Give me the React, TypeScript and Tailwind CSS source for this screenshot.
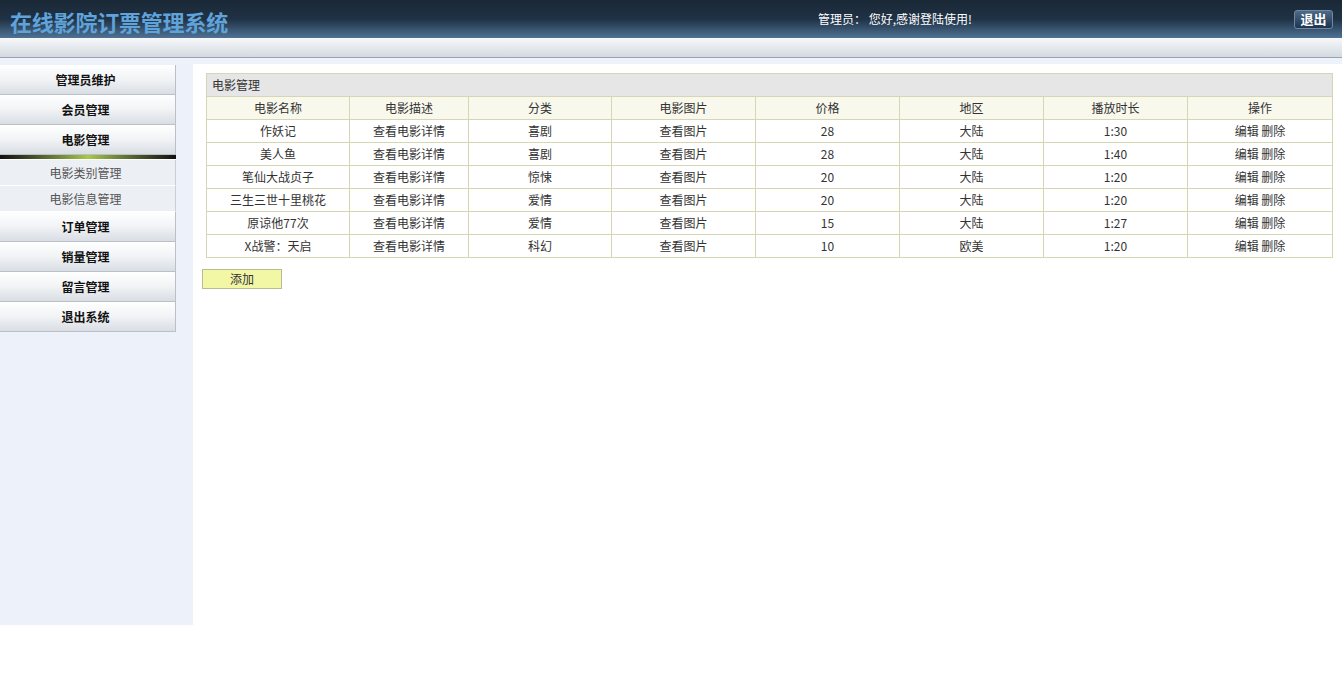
import React from "react";

const movies = [
  ["作妖记", "喜剧", "28", "大陆", "1:30"],
  ["美人鱼", "喜剧", "28", "大陆", "1:40"],
  ["笔仙大战贞子", "惊悚", "20", "大陆", "1:20"],
  ["三生三世十里桃花", "爱情", "20", "大陆", "1:20"],
  ["原谅他77次", "爱情", "15", "大陆", "1:27"],
  ["X战警：天启", "科幻", "10", "欧美", "1:20"],
];

const heads = ["电影名称", "电影描述", "分类", "电影图片", "价格", "地区", "播放时长", "操作"];
const widths = ["w-[143px]", "w-[119px]", "w-[143px]", "w-[144px]", "w-[144px]", "w-[144px]", "w-[144px]", "w-[145px]"];

function MenuItem({ label }: { label: string }) {
  return (
    <div className="flex h-[30px] w-[176px] items-center justify-center pr-[4px] border-r border-b border-[#b9c0c8] bg-gradient-to-b from-[#ffffff] via-[#f1f3f5] to-[#d9dee4] text-[12px] font-bold text-[#111]">
      {label}
    </div>
  );
}

function SubItem({ label }: { label: string }) {
  return (
    <div className="flex h-[26px] w-[176px] items-center justify-center pr-[4px] border-r border-b border-r-[#c9ced4] border-b-[#ffffff] bg-[#eceff3] text-[12px] text-[#555]">
      {label}
    </div>
  );
}

export default function App() {
  return (
    <div className="w-[1342px] h-[699px] bg-white font-['Noto_Sans_CJK_SC','Microsoft_YaHei',sans-serif] text-[12px]">
      <header className="flex h-[38px] items-center justify-between bg-gradient-to-b from-[#1a2836] via-[#1f3245] to-[#4f7395] pl-[10px] pr-[9px]">
        <h1 className="text-[22px] font-bold tracking-[-0.2px] text-[#5fa3da] leading-none pt-[4px]">
          在线影院订票管理系统
        </h1>
        <div className="flex items-center">
          <span className="mr-[322px] text-[12px] text-white">管理员： 您好,感谢登陆使用!</span>
          <button className="flex h-[19px] w-[39px] items-center justify-center rounded-[3px] border border-[#6f89a3] bg-gradient-to-b from-[#4d6a88] to-[#1e3550] text-[13px] font-bold text-white">
            退出
          </button>
        </div>
      </header>
      <div className="h-[20px] border-b border-[#9aa3ad] bg-gradient-to-b from-[#f7f8f9] to-[#d3dae2]" />
      <div className="h-[6px] bg-[#eef2fa]" />
      <div className="flex">
        <aside className="h-[561px] w-[193px] bg-[#edf1fa] pt-[1px]">
          <MenuItem label="管理员维护" />
          <MenuItem label="会员管理" />
          <MenuItem label="电影管理" />
          <div className="h-[4px] w-[176px] bg-gradient-to-r from-[#111] via-[#a8c84a] to-[#111]" />
          <div className="h-[1px] w-[176px] bg-[#ffffff]" />
          <SubItem label="电影类别管理" />
          <SubItem label="电影信息管理" />
          <MenuItem label="订单管理" />
          <MenuItem label="销量管理" />
          <MenuItem label="留言管理" />
          <MenuItem label="退出系统" />
        </aside>
        <main className="flex-1 pl-[9px] pt-[9px]">
          <table className="ml-[4px] w-[1127px] table-fixed border-collapse border border-[#d6d6b4] text-[#333]">
            <colgroup>
              {widths.map((w, i) => (
                <col key={i} className={w} />
              ))}
            </colgroup>
            <thead>
              <tr className="h-[23px] bg-[#e6e6e6]">
                <th colSpan={8} className="border border-[#d6d6b4] pl-[5px] text-left font-normal">
                  电影管理
                </th>
              </tr>
              <tr className="h-[23px] bg-[#f8f8ec]">
                {heads.map((h) => (
                  <th key={h} className="border border-[#d6d6b4] font-normal">
                    {h}
                  </th>
                ))}
              </tr>
            </thead>
            <tbody>
              {movies.map((m) => (
                <tr key={m[0]} className="h-[23px] text-center">
                  <td className="border border-[#d6d6b4]">{m[0]}</td>
                  <td className="border border-[#d6d6b4]">查看电影详情</td>
                  <td className="border border-[#d6d6b4]">{m[1]}</td>
                  <td className="border border-[#d6d6b4]">查看图片</td>
                  <td className="border border-[#d6d6b4]">{m[2]}</td>
                  <td className="border border-[#d6d6b4]">{m[3]}</td>
                  <td className="border border-[#d6d6b4]">{m[4]}</td>
                  <td className="border border-[#d6d6b4]">编辑 删除</td>
                </tr>
              ))}
            </tbody>
          </table>
          <button className="mt-[11px] h-[20px] w-[80px] border border-[#b8bc90] bg-[#f2f7a6] text-[12px] text-[#333]">
            添加
          </button>
        </main>
      </div>
    </div>
  );
}
